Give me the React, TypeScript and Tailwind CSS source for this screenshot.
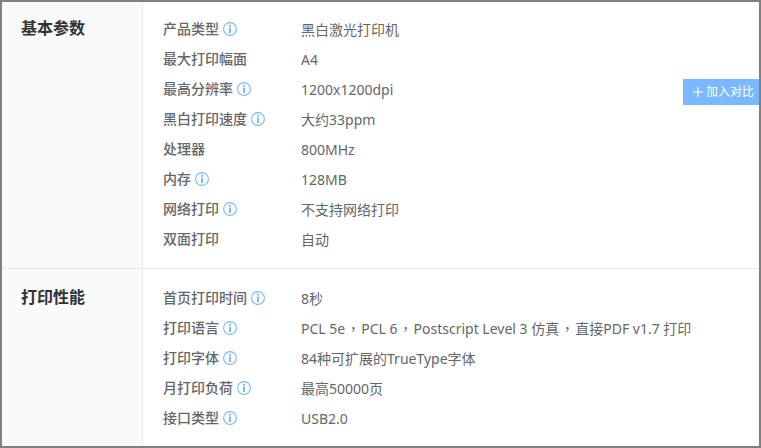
const sections = [
  {
    title: "基本参数",
    rows: [
      { label: "产品类型", value: "黑白激光打印机", info: true },
      { label: "最大打印幅面", value: "A4" },
      { label: "最高分辨率", value: "1200x1200dpi", info: true },
      { label: "黑白打印速度", value: "大约33ppm", info: true },
      { label: "处理器", value: "800MHz" },
      { label: "内存", value: "128MB", info: true },
      { label: "网络打印", value: "不支持网络打印", info: true },
      { label: "双面打印", value: "自动" },
    ],
  },
  {
    title: "打印性能",
    rows: [
      { label: "首页打印时间", value: "8秒", info: true },
      { label: "打印语言", value: "PCL 5e，PCL 6，Postscript Level 3 仿真，直接PDF v1.7 打印", info: true },
      { label: "打印字体", value: "84种可扩展的TrueType字体", info: true },
      { label: "月打印负荷", value: "最高50000页", info: true },
      { label: "接口类型", value: "USB2.0", info: true },
    ],
  },
]

function InfoIcon() {
  return (
    <svg className="ml-1 h-[14px] w-[14px] shrink-0 text-[#7ab8ff]" viewBox="0 0 14 14" fill="none">
      <circle cx="7" cy="7" r="6.4" stroke="currentColor" strokeWidth="1.1" />
      <rect x="6" y="2.8" width="2" height="1.8" fill="currentColor" />
      <rect x="6" y="5.6" width="2" height="5.4" fill="currentColor" />
    </svg>
  )
}

// commas sit centred in the cell in the original, the TC face draws them that way
function Value({ text }: { text: string }) {
  const parts = text.split("，")
  return (
    <div className="pt-px text-[#666]">
      {parts.map((part, i) => (
        <span key={i}>
          {part}
          {i < parts.length - 1 && <span className="px-[1px] font-['Noto_Sans_CJK_TC',sans-serif]">，</span>}
        </span>
      ))}
    </div>
  )
}

export default function App() {
  return (
    <div className="relative h-[448px] w-[761px] overflow-hidden border-2 border-[#808080] bg-white font-['Noto_Sans','Noto_Sans_CJK_SC',sans-serif] text-sm">
      {sections.map((section, i) => (
        <div key={section.title} className={`flex ${i === 0 ? "h-[266px]" : "h-[178px] border-t border-[#e8e8e8]"}`}>
          <div className={`w-[141px] shrink-0 border-r border-[#e8e8e8] bg-[#fafafa] pl-[19px] ${i === 0 ? "pt-[12px]" : "pt-[14px]"}`}>
            <h2 className="text-base leading-[28px] font-bold text-[#333]">{section.title}</h2>
          </div>
          <div className={`flex-1 pl-5 ${i === 0 ? "pt-[12px]" : "pt-[14px]"}`}>
            {section.rows.map((row) => (
              <div key={row.label} className="flex h-[30px] items-center leading-[28px]">
                <div className="flex w-[138px] shrink-0 items-center font-medium text-[#666]">
                  {row.label}
                  {row.info && <InfoIcon />}
                </div>
                <Value text={row.value} />
              </div>
            ))}
          </div>
        </div>
      ))}
      <button
        type="button"
        className="absolute right-0 top-[77px] flex h-[26px] w-[76px] items-center gap-[3px] bg-[#7ab8ff] pl-[10px] text-xs text-white"
      >
        <svg className="h-[10px] w-[10px]" viewBox="0 0 10 10" fill="none" stroke="currentColor" strokeWidth="1.2">
          <path d="M5 0v10M0 5h10" />
        </svg>
        加入对比
      </button>
    </div>
  )
}
